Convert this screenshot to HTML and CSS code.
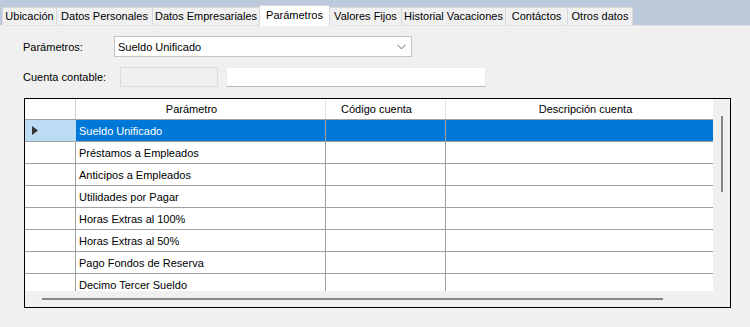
FILE: index.html
```html
<!DOCTYPE html>
<html lang="es">
<head>
    <meta charset="UTF-8">
    <title>Parámetros</title>
    <link rel="stylesheet" href="styles.css">
</head>
<body>
    <div class="tabs">
        <div class="tab">Ubicación</div>
        <div class="tab">Datos Personales</div>
        <div class="tab">Datos Empresariales</div>
        <div class="tab active">Parámetros</div>
        <div class="tab">Valores Fijos</div>
        <div class="tab">Historial Vacaciones</div>
        <div class="tab">Contáctos</div>
        <div class="tab">Otros datos</div>
    </div>

    <div class="panel">
        <div class="field-row">
            <label class="label label-param">Parámetros:</label>
            <div class="combo">
                <span>Sueldo Unificado</span>
                <svg class="chevron" width="9" height="6" viewBox="0 0 9 6">
                    <path d="M0.5 0.8 L4.5 4.8 L8.5 0.8" fill="none" stroke="#606060" stroke-width="1"/>
                </svg>
            </div>
        </div>

        <div class="field-row">
            <label class="label label-cuenta">Cuenta contable:</label>
            <div class="box-disabled"></div>
            <div class="box-text"></div>
        </div>

        <div class="grid">
            <div class="grid-view">
                <div class="row header">
                    <div class="cell rowhead"></div>
                    <div class="cell col-param">Parámetro</div>
                    <div class="cell col-code">Código cuenta</div>
                    <div class="cell col-desc">Descripción cuenta</div>
                </div>
                <div class="row selected">
                    <div class="cell rowhead">
                        <svg width="6" height="9" viewBox="0 0 6 9"><path d="M0 0 L6 4.5 L0 9 Z" fill="#333"/></svg>
                    </div>
                    <div class="cell col-param">Sueldo Unificado</div>
                    <div class="cell col-code"></div>
                    <div class="cell col-desc"></div>
                </div>
                <div class="row">
                    <div class="cell rowhead"></div>
                    <div class="cell col-param">Préstamos a Empleados</div>
                    <div class="cell col-code"></div>
                    <div class="cell col-desc"></div>
                </div>
                <div class="row">
                    <div class="cell rowhead"></div>
                    <div class="cell col-param">Anticipos a Empleados</div>
                    <div class="cell col-code"></div>
                    <div class="cell col-desc"></div>
                </div>
                <div class="row">
                    <div class="cell rowhead"></div>
                    <div class="cell col-param">Utilidades por Pagar</div>
                    <div class="cell col-code"></div>
                    <div class="cell col-desc"></div>
                </div>
                <div class="row">
                    <div class="cell rowhead"></div>
                    <div class="cell col-param">Horas Extras al 100%</div>
                    <div class="cell col-code"></div>
                    <div class="cell col-desc"></div>
                </div>
                <div class="row">
                    <div class="cell rowhead"></div>
                    <div class="cell col-param">Horas Extras al 50%</div>
                    <div class="cell col-code"></div>
                    <div class="cell col-desc"></div>
                </div>
                <div class="row">
                    <div class="cell rowhead"></div>
                    <div class="cell col-param">Pago Fondos de Reserva</div>
                    <div class="cell col-code"></div>
                    <div class="cell col-desc"></div>
                </div>
                <div class="row">
                    <div class="cell rowhead"></div>
                    <div class="cell col-param">Decimo Tercer Sueldo</div>
                    <div class="cell col-code"></div>
                    <div class="cell col-desc"></div>
                </div>
            </div>
            <div class="vscroll"><div class="vthumb"></div></div>
            <div class="hscroll"><div class="hthumb"></div></div>
            <div class="corner"></div>
        </div>
    </div>
</body>
</html>
```

FILE: styles.css
```css
* {
    box-sizing: border-box;
}

body {
    margin: 0;
    width: 750px;
    height: 327px;
    overflow: hidden;
    background-color: #bccadb;
    font-family: "Liberation Sans", Arial, sans-serif;
    font-size: 11px;
    color: #000;
}

/* tab strip */
.tabs {
    display: flex;
    align-items: flex-end;
    height: 25px;
    padding-left: 2px;
}

.tab {
    flex: none;
    height: 18px;
    line-height: 17px;
    text-align: center;
    background-color: #f0f0f0;
    border: 1px solid #d9d9d9;
    border-bottom: none;
    border-right: none;
    white-space: nowrap;
}

.tab:nth-child(1) { width: 54px; }
.tab:nth-child(2) { width: 96px; }
.tab:nth-child(3) { width: 107px; }
.tab:nth-child(4) { width: 70px; }
.tab:nth-child(5) { width: 72px; }
.tab:nth-child(6) { width: 104px; }
.tab:nth-child(7) { width: 62px; }
.tab:nth-child(8) { width: 66px; border-right: 1px solid #d9d9d9; }

.tab.active {
    height: 21px;
    line-height: 19px;
    margin-bottom: -1px;
    background-color: #fff;
    position: relative;
    z-index: 1;
}

/* tab page */
.panel {
    height: 302px;
    background-color: #f0f0f0;
    border-top: 1px solid #e3e3e3;
    padding: 10px 0 0 23px;
}

.field-row {
    display: flex;
    align-items: center;
}

.field-row + .field-row {
    margin-top: 10px;
}

.label-param {
    width: 91px;
}

.label-cuenta {
    width: 97px;
}

.combo {
    width: 298px;
    height: 21px;
    background-color: #fff;
    border: 1px solid #c4c4c4;
    display: flex;
    align-items: center;
    justify-content: space-between;
    padding: 0 5px 0 3px;
}

.box-disabled {
    width: 98px;
    height: 20px;
    background-color: #f0f0f0;
    border: 1px solid #dcdcdc;
}

.box-text {
    width: 260px;
    height: 20px;
    margin-left: 8px;
    background-color: #fff;
    border: 1px solid #ececec;
    border-bottom-color: #b8b8b8;
}

/* data grid */
.grid {
    margin: 11px 0 0 1px;
    width: 707px;
    height: 210px;
    border: 1px solid #000;
    display: grid;
    grid-template-columns: 688px 17px;
    grid-template-rows: 192px 16px;
    background-color: #f0f0f0;
}

.grid-view {
    overflow: hidden;
}

.row {
    display: flex;
    width: max-content;
    height: 22px;
    border-bottom: 1px solid #a0a0a0;
    background-color: #fff;
}

.row.header {
    height: 21px;
}

.cell {
    flex: none;
    height: 100%;
    border-right: 1px solid #a0a0a0;
    padding-left: 3px;
    display: flex;
    align-items: center;
    white-space: nowrap;
}

.header .cell {
    justify-content: center;
    padding: 0 18px 0 0;
    border-right-color: #e2e2e2;
}

.rowhead {
    width: 51px;
    padding-left: 7px;
}

.header .rowhead {
    border-right-color: #d0d0d0;
}

.col-param {
    width: 250px;
}

.col-code {
    width: 120px;
}

.col-desc {
    width: 298px;
}

.selected .cell {
    background-color: #0078d7;
    color: #fff;
}

.selected .rowhead {
    background-color: #bcdcf4;
    border-right-color: #bcdcf4;
}

.vscroll {
    position: relative;
}

.vthumb {
    margin: 17px 0 0 8px;
    width: 2px;
    height: 76px;
    background-color: #868686;
}

.hthumb {
    margin: 7px 0 0 17px;
    width: 621px;
    height: 2px;
    background-color: #868686;
}
```
